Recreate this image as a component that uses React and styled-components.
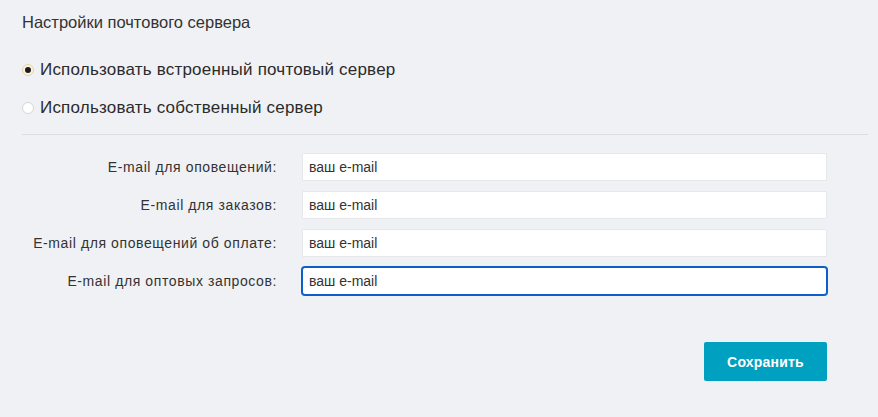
import React, { useState } from "react";
import styled, { createGlobalStyle } from "styled-components";

const GlobalStyle = createGlobalStyle`
  html, body {
    margin: 0;
    padding: 0;
    background: #f0f1f5;
  }
  body {
    font-family: "Liberation Sans", Arial, sans-serif;
    color: #333;
  }
`;

const SettingsBlock = styled.div`
  width: 878px;
  height: 417px;
  box-sizing: border-box;
  padding: 11px 10px 0 22px;
  background: #f0f1f5;
`;

const Title = styled.h2`
  margin: 0;
  font-size: 16.5px;
  font-weight: 400;
  line-height: 22px;
  color: #333;
`;

const RadioList = styled.div`
  display: flex;
  flex-direction: column;
  gap: 17px;
  margin-top: 26px;
  padding-bottom: 16px;
  border-bottom: 1px solid #dcdde2;
`;

const RadioLabel = styled.label`
  display: flex;
  align-items: center;
  gap: 6px;
  font-size: 17px;
  letter-spacing: 0.2px;
  line-height: 21px;
  color: #2b2b2b;
  cursor: pointer;
`;

const RadioDot = styled.span`
  width: 12px;
  height: 12px;
  box-sizing: border-box;
  border-radius: 50%;
  flex: 0 0 12px;
  border: 1px solid ${(p) => (p.checked ? "#e6d3a8" : "#d6d6d9")};
  background: ${(p) => (p.checked ? "#fbf3df" : "#fff")};
  display: flex;
  align-items: center;
  justify-content: center;
  &::after {
    content: "";
    width: 6px;
    height: 6px;
    border-radius: 50%;
    background: #1b1b1b;
    display: ${(p) => (p.checked ? "block" : "none")};
  }
`;

const Form = styled.div`
  display: flex;
  flex-direction: column;
  gap: 10px;
  margin-top: 18px;
  padding-right: 41px;
`;

const Row = styled.div`
  display: grid;
  grid-template-columns: 255px 1fr;
  column-gap: 25px;
  align-items: center;
`;

const FieldLabel = styled.span`
  text-align: right;
  font-size: 14px;
  letter-spacing: 0.6px;
  color: #333;
`;

const Input = styled.input`
  height: 28px;
  box-sizing: border-box;
  padding: 0 6px;
  font-family: "Liberation Sans", Arial, sans-serif;
  font-size: 14px;
  color: #333;
  background: #fff;
  border: 1px solid ${(p) => (p.active ? "#0a5fc8" : "#e6e7ea")};
  border-radius: ${(p) => (p.active ? "3px" : "1px")};
  box-shadow: ${(p) => (p.active ? "0 0 0 1px #0a5fc8" : "none")};
  outline: none;
`;

const Footer = styled.div`
  display: flex;
  justify-content: flex-end;
  padding-right: 41px;
  margin-top: 47px;
`;

const SaveButton = styled.button`
  width: 123px;
  height: 39px;
  border: none;
  border-radius: 2px;
  background: #00a0c0;
  color: #fff;
  font-family: "Liberation Sans", Arial, sans-serif;
  font-size: 14px;
  font-weight: 700;
  letter-spacing: 0.2px;
  cursor: pointer;
`;

const fields = [
  "E-mail для оповещений:",
  "E-mail для заказов:",
  "E-mail для оповещений об оплате:",
  "E-mail для оптовых запросов:",
];

const App = () => {
  const [server, setServer] = useState("builtin");

  return (
    <>
      <GlobalStyle />
      <SettingsBlock>
        <Title>Настройки почтового сервера</Title>
        <RadioList>
          <RadioLabel onClick={() => setServer("builtin")}>
            <RadioDot checked={server === "builtin"} />
            Использовать встроенный почтовый сервер
          </RadioLabel>
          <RadioLabel onClick={() => setServer("own")}>
            <RadioDot checked={server === "own"} />
            Использовать собственный сервер
          </RadioLabel>
        </RadioList>
        <Form>
          {fields.map((label, i) => (
            <Row key={label}>
              <FieldLabel>{label}</FieldLabel>
              <Input defaultValue="ваш e-mail" active={i === fields.length - 1} />
            </Row>
          ))}
        </Form>
        <Footer>
          <SaveButton>Сохранить</SaveButton>
        </Footer>
      </SettingsBlock>
    </>
  );
};

export default App;
